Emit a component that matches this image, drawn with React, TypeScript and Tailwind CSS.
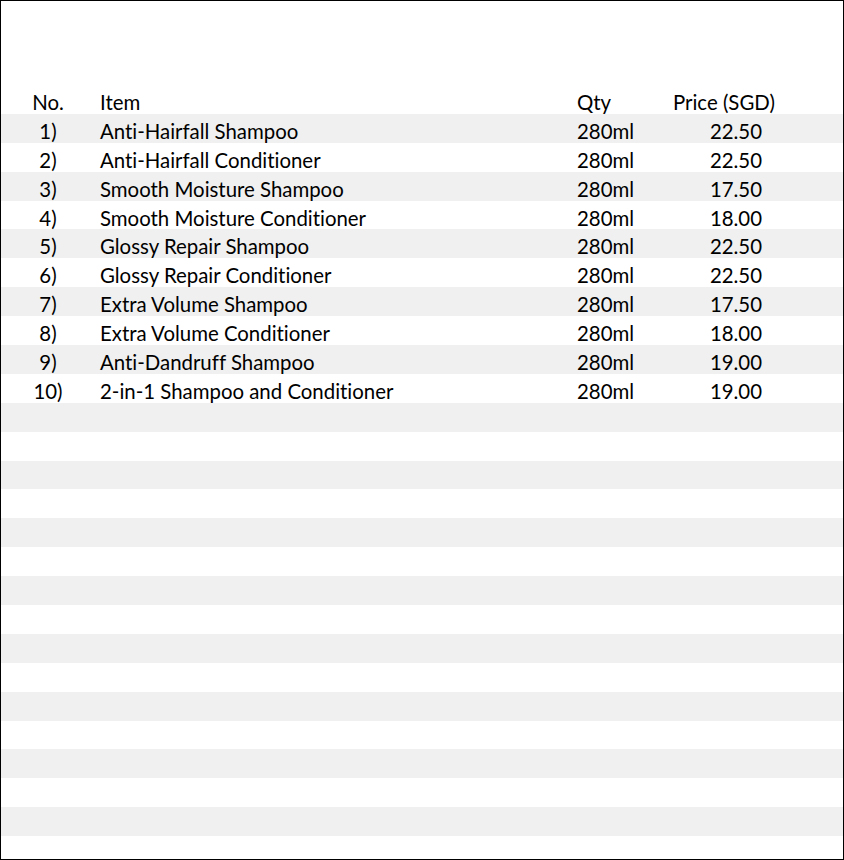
import React from "react";

const items: [string, string, string, string][] = [
  ["1)", "Anti-Hairfall Shampoo", "280ml", "22.50"],
  ["2)", "Anti-Hairfall Conditioner", "280ml", "22.50"],
  ["3)", "Smooth Moisture Shampoo", "280ml", "17.50"],
  ["4)", "Smooth Moisture Conditioner", "280ml", "18.00"],
  ["5)", "Glossy Repair Shampoo", "280ml", "22.50"],
  ["6)", "Glossy Repair Conditioner", "280ml", "22.50"],
  ["7)", "Extra Volume Shampoo", "280ml", "17.50"],
  ["8)", "Extra Volume Conditioner", "280ml", "18.00"],
  ["9)", "Anti-Dandruff Shampoo", "280ml", "19.00"],
  ["10)", "2-in-1 Shampoo and Conditioner", "280ml", "19.00"],
];

function Row({
  cells,
  gray,
  header,
}: {
  cells: [string, string, string, string];
  gray: boolean;
  header?: boolean;
}) {
  return (
    <div className={`flex items-end h-[28.9px] pb-[1.5px] leading-none ${gray ? "bg-[#f0f0f0]" : "bg-white"}`}>
      <div className="w-[94px] text-center">{cells[0]}</div>
      <div className="w-[477px] pl-[5px]">{cells[1]}</div>
      <div className="w-[101px] pl-[5px]">{cells[2]}</div>
      {header ? (
        <div className="w-[110px] whitespace-nowrap">{cells[3]}</div>
      ) : (
        <div className="w-[89px] text-right">{cells[3]}</div>
      )}
    </div>
  );
}

export default function App() {
  const rows: [string, string, string, string][] = [...items];
  while (rows.length < 26) rows.push(["", "", "", ""]);
  return (
    <div
      className="w-[844px] h-[860px] border border-black overflow-hidden bg-white text-black text-[20.4px] [font-variant-ligatures:none]"
      style={{ fontFamily: "Lato, 'Open Sans', sans-serif" }}
    >
      <div className="pt-[84px]">
        <Row cells={["No.", "Item", "Qty", "Price (SGD)"]} gray={false} header />
        {rows.map((r, i) => (
          <Row key={i} cells={r} gray={i % 2 === 0} />
        ))}
      </div>
    </div>
  );
}
